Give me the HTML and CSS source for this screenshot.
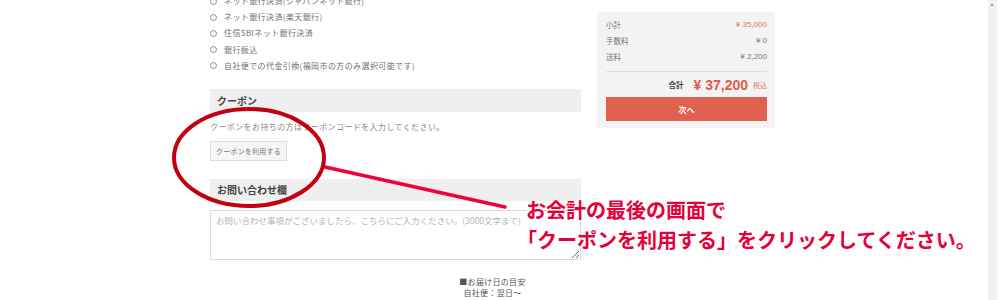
FILE: index.html
```html
<!DOCTYPE html>
<html lang="ja">
<head>
<meta charset="utf-8">
<title>Checkout</title>
<link rel="stylesheet" href="styles.css">
</head>
<body>
<div class="page">
  <div class="main">
    <div class="container">
      <div class="cols">
        <div class="left">
          <ul class="radios">
            <li><span class="radio"></span>ネット銀行決済(ジャパンネット銀行)</li>
            <li><span class="radio"></span>ネット銀行決済(楽天銀行)</li>
            <li><span class="radio"></span>住信SBIネット銀行決済</li>
            <li><span class="radio"></span>銀行振込</li>
            <li><span class="radio"></span>自社便での代金引換(福岡市の方のみ選択可能です)</li>
          </ul>
          <h2 class="sec-head coupon-head">クーポン</h2>
          <p class="desc">クーポンをお持ちの方はクーポンコードを入力してください。</p>
          <button class="btn-coupon">クーポンを利用する</button>
          <h2 class="sec-head inquiry-head">お問い合わせ欄</h2>
          <textarea class="inquiry" placeholder="お問い合わせ事項がございましたら、こちらにご入力ください。(3000文字まで)"></textarea>
        </div>
        <div class="summary">
          <div class="row"><span>小計</span><span class="val red">¥ 35,000</span></div>
          <div class="row"><span>手数料</span><span class="val">¥ 0</span></div>
          <div class="row"><span>送料</span><span class="val">¥ 2,200</span></div>
          <div class="total"><span class="t-label">合計</span><span class="t-val">¥ 37,200</span><span class="t-tax">税込</span></div>
          <button class="btn-next">次へ</button>
        </div>
      </div>
      <div class="note">■お届け日の目安<br>自社便：翌日～</div>
    </div>
  </div>
  <div class="scrollbar"><span class="arrow"></span></div>

  <svg class="overlay" width="1000" height="300" viewBox="0 0 1000 300">
    <line x1="325" y1="167" x2="505" y2="207" stroke="#f0003c" stroke-width="3.5" stroke-linecap="round"/>
    <ellipse cx="249" cy="157.5" rx="75" ry="48.5" fill="none" stroke="#c2000f" stroke-width="4"/>
  </svg>
  <div class="callout l1">お会計の最後の画面で</div>
  <div class="callout l2">「クーポンを利用する」をクリックしてください。</div>
</div>
</body>
</html>
```

FILE: styles.css
```css
* { box-sizing: border-box; }
html, body { margin: 0; padding: 0; background: #fff; }
body {
  font-family: "Noto Sans CJK JP", "Liberation Sans", sans-serif;
  color: #666;
  overflow: hidden;
}
.page {
  position: relative;
  width: 1000px;
  height: 300px;
  display: flex;
  overflow: hidden;
}
.main { flex: 1; }
.container {
  width: 565px;
  margin-left: 210px;
}
.cols {
  display: flex;
  gap: 16px;
  align-items: flex-start;
  margin-top: -7px;
}
.left { width: 371px; }
.radios {
  list-style: none;
  margin: 0;
  padding: 0;
}
.radios li {
  height: 16.2px;
  line-height: 16.2px;
  font-size: 8px;
  letter-spacing: 0.4px;
  color: #707070;
  display: flex;
  align-items: center;
}
.radio {
  width: 7px;
  height: 7px;
  border: 1px solid #8a8a8a;
  border-radius: 50%;
  margin-right: 7px;
  flex: none;
}
.sec-head {
  margin: 0;
  background: #efefef;
  font-size: 10px;
  font-weight: 700;
  color: #444;
  padding-left: 7px;
  display: flex;
  align-items: center;
}
.coupon-head { margin-top: 15px; height: 23px; }
.inquiry-head { margin-top: 18px; height: 22px; }
.desc {
  margin: 8px 0 0;
  font-size: 8px;
  line-height: 14px;
  letter-spacing: 0.4px;
  color: #888;
}
.btn-coupon {
  display: block;
  margin-top: 7px;
  width: 77px;
  height: 20px;
  padding: 0;
  background: #f5f6f7;
  border: 1px solid #dcdcdc;
  font-family: inherit;
  font-size: 7px;
  letter-spacing: 0.2px;
  color: #777;
}
.inquiry {
  display: block;
  margin-top: 9px;
  width: 371px;
  height: 50px;
  padding: 3px 5px;
  border: 1px solid #dcdcdc;
  font-family: inherit;
  font-size: 8.5px;
  line-height: 13px;
  resize: vertical;
}
.inquiry::placeholder { color: #b5b5b5; }
.summary {
  width: 178px;
  margin-top: 19px;
  background: #f3f3f3;
  padding: 5px 8px 7px 9px;
}
.row {
  display: flex;
  justify-content: space-between;
  height: 16px;
  line-height: 16px;
  font-size: 7.5px;
  color: #777;
}
.val { font-family: "Liberation Sans", sans-serif; font-size: 8px; }
.red { color: #e8705f; }
.total {
  margin-top: 6px;
  border-top: 1px solid #dedede;
  height: 26px;
  display: flex;
  justify-content: flex-end;
  align-items: center;
}
.t-label { font-size: 7.5px; font-weight: 700; color: #444; margin-right: 10px; }
.t-val {
  font-family: "Liberation Sans", sans-serif;
  font-size: 14px;
  font-weight: 700;
  color: #e05a4a;
  margin-right: 5px;
}
.t-tax { font-size: 7px; color: #e8705f; }
.btn-next {
  display: block;
  width: 100%;
  height: 24px;
  border: 0;
  background: #e06150;
  color: #fff;
  font-family: inherit;
  font-weight: 700;
  font-size: 8px;
  padding: 0;
}
.note {
  margin-top: 17px;
  text-align: center;
  font-size: 8px;
  line-height: 10.6px;
  letter-spacing: 0.3px;
  color: #555;
}
.scrollbar {
  width: 9px;
  margin-right: 3px;
  background: #f1f1f1;
  position: relative;
  flex: none;
}
.arrow {
  position: absolute;
  left: 2px;
  top: 3px;
  width: 0;
  height: 0;
  border-left: 2.5px solid transparent;
  border-right: 2.5px solid transparent;
  border-bottom: 3px solid #a3a3a3;
}
.overlay {
  position: absolute;
  left: 0;
  top: 0;
  pointer-events: none;
}
.callout {
  position: absolute;
  font-size: 20px;
  font-weight: 700;
  color: #e5003a;
  line-height: 30px;
  white-space: nowrap;
}
.l1 { left: 526px; top: 195px; }
.l2 { left: 517px; top: 225px; }
```
